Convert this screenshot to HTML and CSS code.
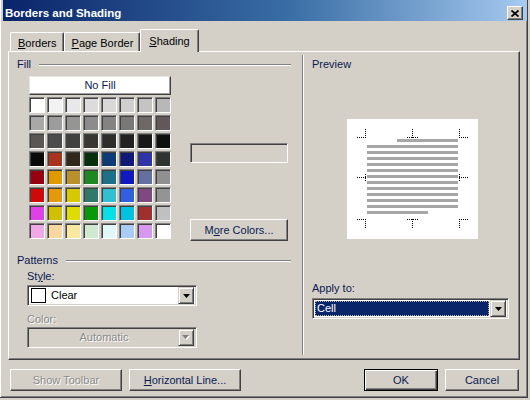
FILE: index.html
```html
<!DOCTYPE html>
<html lang="en">

<head>
    <meta charset="UTF-8">
    <title>Borders and Shading</title>
    <link rel="stylesheet" href="styles.css">
</head>

<body>
    <div class="window">
        <div class="titlebar">
            <span class="title">Borders and Shading</span>
            <button class="close">
                <svg width="8" height="7" viewBox="0 0 8 7">
                    <path d="M0.5 0.5 L7.5 6.5 M7.5 0.5 L0.5 6.5" stroke="#000" stroke-width="1.7" fill="none"/>
                </svg>
            </button>
        </div>

        <div class="tabs">
            <div class="tab"><u>B</u>orders</div>
            <div class="tab"><u>P</u>age Border</div>
            <div class="tab active"><u>S</u>hading</div>
        </div>

        <div class="panel">
            <div class="col-left">
                <div class="group-head"><span>Fill</span><div class="etch"></div></div>

                <div class="fill-body">
                    <div class="palette">
                        <button class="no-fill">No Fill</button>
                        <div class="swatches">
                            <!-- row 1 -->
                            <span class="swatch" style="background:#ffffff"></span>
                            <span class="swatch" style="background:#f2f2f2"></span>
                            <span class="swatch" style="background:#e8e8ea"></span>
                            <span class="swatch" style="background:#dcdcdc"></span>
                            <span class="swatch" style="background:#d8d8d8"></span>
                            <span class="swatch" style="background:#cfcfcf"></span>
                            <span class="swatch" style="background:#c4c4c4"></span>
                            <span class="swatch" style="background:#b8b8b8"></span>
                            <!-- row 2 -->
                            <span class="swatch" style="background:#a8a8a8"></span>
                            <span class="swatch" style="background:#9c9c9c"></span>
                            <span class="swatch" style="background:#959595"></span>
                            <span class="swatch" style="background:#8c8c8c"></span>
                            <span class="swatch" style="background:#838383"></span>
                            <span class="swatch" style="background:#787878"></span>
                            <span class="swatch" style="background:#6e6866"></span>
                            <span class="swatch" style="background:#62585a"></span>
                            <!-- row 3 -->
                            <span class="swatch" style="background:#5a5654"></span>
                            <span class="swatch" style="background:#4c4c4c"></span>
                            <span class="swatch" style="background:#404240"></span>
                            <span class="swatch" style="background:#383830"></span>
                            <span class="swatch" style="background:#2e2e2e"></span>
                            <span class="swatch" style="background:#222222"></span>
                            <span class="swatch" style="background:#191919"></span>
                            <span class="swatch" style="background:#0e120e"></span>
                            <!-- row 4 -->
                            <span class="swatch" style="background:#0a0a0a"></span>
                            <span class="swatch" style="background:#a83420"></span>
                            <span class="swatch" style="background:#30281a"></span>
                            <span class="swatch" style="background:#08300c"></span>
                            <span class="swatch" style="background:#0c3c78"></span>
                            <span class="swatch" style="background:#101878"></span>
                            <span class="swatch" style="background:#3034a8"></span>
                            <span class="swatch" style="background:#303430"></span>
                            <!-- row 5 -->
                            <span class="swatch" style="background:#980010"></span>
                            <span class="swatch" style="background:#e09a00"></span>
                            <span class="swatch" style="background:#b8902c"></span>
                            <span class="swatch" style="background:#208820"></span>
                            <span class="swatch" style="background:#1c7088"></span>
                            <span class="swatch" style="background:#1018c0"></span>
                            <span class="swatch" style="background:#6470a0"></span>
                            <span class="swatch" style="background:#909090"></span>
                            <!-- row 6 -->
                            <span class="swatch" style="background:#d00808"></span>
                            <span class="swatch" style="background:#e4980c"></span>
                            <span class="swatch" style="background:#d8c800"></span>
                            <span class="swatch" style="background:#307868"></span>
                            <span class="swatch" style="background:#30c0d0"></span>
                            <span class="swatch" style="background:#3060e0"></span>
                            <span class="swatch" style="background:#804880"></span>
                            <span class="swatch" style="background:#949494"></span>
                            <!-- row 7 -->
                            <span class="swatch" style="background:#e040e8"></span>
                            <span class="swatch" style="background:#d0c000"></span>
                            <span class="swatch" style="background:#e0dc00"></span>
                            <span class="swatch" style="background:#089808"></span>
                            <span class="swatch" style="background:#08e0e8"></span>
                            <span class="swatch" style="background:#00c0e0"></span>
                            <span class="swatch" style="background:#a03030"></span>
                            <span class="swatch" style="background:#c0c0c0"></span>
                            <!-- row 8 -->
                            <span class="swatch" style="background:#f0a8e8"></span>
                            <span class="swatch" style="background:#f8d8a0"></span>
                            <span class="swatch" style="background:#f8e8a0"></span>
                            <span class="swatch" style="background:#d0e8d0"></span>
                            <span class="swatch" style="background:#e0f8f8"></span>
                            <span class="swatch" style="background:#a8ccf4"></span>
                            <span class="swatch" style="background:#d898f0"></span>
                            <span class="swatch" style="background:#ffffff"></span>
                        </div>
                    </div>
                    <div class="fill-side">
                        <div class="sample"></div>
                        <button class="btn more">M<u>o</u>re Colors...</button>
                    </div>
                </div>

                <div class="group-head patterns-head"><span>Patterns</span><div class="etch"></div></div>

                <div class="patterns-body">
                    <div class="field-label">St<u>y</u>le:</div>
                    <div class="combo">
                        <span class="pattern-box"></span>
                        <span class="combo-text">Clear</span>
                        <span class="drop">
                            <svg width="7" height="4" viewBox="0 0 7 4"><path d="M0 0h7L3.5 4z" fill="#000"/></svg>
                        </span>
                    </div>

                    <div class="field-label disabled gap">Color:</div>
                    <div class="combo combo-disabled">
                        <span class="combo-text centered">Automatic</span>
                        <span class="drop">
                            <svg width="8" height="5" viewBox="0 0 8 5">
                                <path d="M1 1h7L4.5 5z" fill="#fff"/>
                                <path d="M0 0h7L3.5 4z" fill="#808080"/>
                            </svg>
                        </span>
                    </div>
                </div>
            </div>

            <div class="divider"></div>

            <div class="col-right">
                <div class="group-head"><span>Preview</span></div>

                <div class="preview">
                    <svg width="131" height="120" viewBox="0 0 131 120">
                        <g fill="#a6a6a6">
                            <rect x="50" y="20" width="61" height="3"/>
                            <rect x="20" y="26" width="91" height="3"/>
                            <rect x="20" y="32" width="91" height="3"/>
                            <rect x="20" y="38" width="91" height="3"/>
                            <rect x="20" y="44" width="91" height="3"/>
                            <rect x="20" y="50" width="91" height="3"/>
                            <rect x="20" y="56" width="91" height="3"/>
                            <rect x="20" y="62" width="91" height="3"/>
                            <rect x="20" y="68" width="91" height="3"/>
                            <rect x="20" y="74" width="91" height="3"/>
                            <rect x="20" y="80" width="91" height="3"/>
                            <rect x="20" y="86" width="91" height="3"/>
                            <rect x="20" y="92" width="61" height="3"/>
                        </g>
                        <!-- cell corner and edge marks -->
                        <g stroke="#000" stroke-width="1" stroke-dasharray="1 1" fill="none">
                            <path d="M10 18.5h9 M18.5 10v9"/>
                            <path d="M65.5 10v9 M60 18.5h11"/>
                            <path d="M112.5 10v9 M112 18.5h10"/>
                            <path d="M10 58.5h9 M18.5 55v8"/>
                            <path d="M112 58.5h10 M112.5 55v8"/>
                            <path d="M10 100.5h9 M18.5 100v10"/>
                            <path d="M60 100.5h11 M65.5 100v10"/>
                            <path d="M112 100.5h10 M112.5 100v10"/>
                        </g>
                    </svg>
                </div>

                <div class="field-label apply-label">Apply to:</div>
                <div class="combo apply">
                    <span class="selected">Cell</span>
                    <span class="drop">
                        <svg width="7" height="4" viewBox="0 0 7 4"><path d="M0 0h7L3.5 4z" fill="#000"/></svg>
                    </span>
                </div>
            </div>
        </div>

        <div class="footer">
            <button class="btn wide disabled">Show Toolbar</button>
            <button class="btn wide"><u>H</u>orizontal Line...</button>
            <div class="spacer"></div>
            <button class="btn small default">OK</button>
            <button class="btn small">Cancel</button>
        </div>
    </div>
</body>

</html>
```

FILE: styles.css
```css
* {
    box-sizing: border-box;
}

body {
    margin: 0;
    background-color: #d4d0c8;
    font-family: "Liberation Sans", Arial, sans-serif;
    font-size: 11px;
    line-height: 13px;
    color: #000;
}

button {
    font: inherit;
    color: inherit;
    padding: 0;
    margin: 0;
}

u {
    text-decoration-thickness: 1px;
    text-underline-offset: 1px;
}

.window {
    width: 528px;
    height: 398px;
    padding-left: 3px;
    border-right: 1px solid #404040;
    border-bottom: 1px solid #404040;
    box-shadow: inset 1px 0 0 #fff, inset -1px -1px 0 #808080;
    display: flex;
    flex-direction: column;
}

/* title bar */
.titlebar {
    height: 21px;
    display: flex;
    align-items: flex-start;
    justify-content: space-between;
    padding: 0 4px 0 2px;
    background: linear-gradient(to right, #0a246a 0%, #3a6ea5 55%, #a6caf0 100%);
}

.title {
    margin-top: 7px;
    color: #fff;
    font-weight: bold;
    font-size: 11.5px;
}

.close {
    margin-top: 6px;
    width: 16px;
    height: 14px;
    background-color: #d4d0c8;
    border: 1px solid;
    border-color: #fff #404040 #404040 #fff;
    box-shadow: inset -1px -1px 0 #808080;
    display: flex;
    align-items: center;
    justify-content: center;
}

.close svg {
    display: block;
}

/* tabs */
.tabs {
    height: 30px;
    padding-left: 7px;
    display: flex;
    align-items: flex-end;
}

.tab {
    height: 19px;
    padding: 4px 6px 0 7px;
    border: 1px solid;
    border-color: #fff #404040 transparent #fff;
    border-bottom: none;
    border-radius: 2px 2px 0 0;
    box-shadow: inset -1px 0 0 #808080;
    white-space: nowrap;
}

.tab.active {
    position: relative;
    z-index: 1;
    height: 23px;
    margin-bottom: -1px;
    padding: 5px 8px 0 8px;
    background-color: #d4d0c8;
}

/* tab page */
.panel {
    margin-left: 5px;
    width: 512px;
    height: 309px;
    border: 1px solid;
    border-color: #fff #404040 #404040 #fff;
    box-shadow: inset -1px -1px 0 #808080;
    display: flex;
}

.col-left {
    width: 293px;
    padding: 6px 11px 0 8px;
}

.divider {
    width: 2px;
    margin: 3px 0 4px;
    border-left: 1px solid #808080;
    border-right: 1px solid #fff;
}

.col-right {
    flex: 1;
    padding: 6px 0 0 8px;
}

.group-head {
    display: flex;
    align-items: center;
    gap: 8px;
    color: #0a1a50;
}

.etch {
    flex: 1;
    height: 2px;
    border-top: 1px solid #808080;
    border-bottom: 1px solid #fff;
}

/* fill */
.fill-body {
    margin: 5px 0 0 12px;
    display: flex;
    gap: 19px;
}

.palette {
    width: 142px;
}

.no-fill {
    display: block;
    width: 142px;
    height: 19px;
    background-color: #fff;
    border: 1px solid;
    border-color: #e8e6e0 #404040 #404040 #e8e6e0;
    box-shadow: inset -1px -1px 0 #a0a0a0;
    color: #0a1a50;
}

.swatches {
    margin-top: 2px;
    display: grid;
    grid-template-columns: repeat(8, 16px);
    grid-auto-rows: 16px;
    gap: 2px;
}

.swatch {
    border: 1px solid;
    border-color: #808080 #fff #fff #808080;
    box-shadow: inset 1px 1px 0 #404040;
}

.fill-side {
    width: 98px;
}

.sample {
    margin-top: 67px;
    height: 20px;
    border: 1px solid;
    border-color: #808080 #fff #fff #808080;
    box-shadow: inset 1px 1px 0 #404040, inset -1px -1px 0 #d4d0c8;
}

.btn {
    height: 22px;
    background-color: #d4d0c8;
    border: 1px solid;
    border-color: #fff #404040 #404040 #fff;
    box-shadow: inset -1px -1px 0 #808080;
    color: #0a1a50;
    white-space: nowrap;
}

.btn.more {
    display: block;
    width: 98px;
    margin-top: 56px;
}

/* patterns */
.patterns-head {
    margin-top: 13px;
}

.patterns-body {
    margin-left: 10px;
    width: 170px;
}

.field-label {
    margin-top: 3px;
    margin-bottom: 2px;
    color: #0a1a50;
}

.field-label.gap {
    margin-top: 7px;
    margin-bottom: 1px;
}

.disabled {
    color: #8a8a8a;
    text-shadow: 1px 1px 0 #fff;
}

.combo {
    height: 21px;
    padding: 2px;
    display: flex;
    align-items: center;
    background-color: #fff;
    border: 1px solid;
    border-color: #808080 #fff #fff #808080;
    box-shadow: inset 1px 1px 0 #404040, inset -1px -1px 0 #d4d0c8;
}

.combo-disabled {
    background-color: #d4d0c8;
}

.pattern-box {
    width: 15px;
    height: 15px;
    margin-left: 1px;
    border: 1px solid #000;
    background-color: #fff;
}

.combo-text {
    flex: 1;
    padding-left: 5px;
}

.combo-text.centered {
    text-align: center;
    padding-left: 0;
    color: #8a8a8a;
    text-shadow: 1px 1px 0 #fff;
}

.drop {
    width: 16px;
    height: 17px;
    background-color: #d4d0c8;
    border: 1px solid;
    border-color: #d4d0c8 #404040 #404040 #d4d0c8;
    box-shadow: inset 1px 1px 0 #fff, inset -1px -1px 0 #808080;
    display: flex;
    align-items: center;
    justify-content: center;
}

.drop svg {
    display: block;
}

/* preview */
.preview {
    margin: 48px 0 0 35px;
    width: 131px;
    height: 120px;
    background-color: #fff;
}

.preview svg {
    display: block;
}

.apply-label {
    margin-top: 43px;
    margin-bottom: 3px;
}

.combo.apply {
    width: 197px;
}

.selected {
    flex: 1;
    height: 15px;
    margin-right: 1px;
    padding-left: 1px;
    line-height: 13px;
    background-color: #0a246a;
    color: #fff;
    border: 1px dotted #b8b0a0;
}

/* bottom buttons */
.footer {
    margin-top: 9px;
    padding: 0 8px 0 7px;
    display: flex;
    gap: 7px;
}

.spacer {
    flex: 1;
}

.btn.wide {
    width: 112px;
}

.btn.small {
    width: 74px;
}

.btn.default {
    border-color: #000;
    box-shadow: inset 1px 1px 0 #fff, inset -1px -1px 0 #404040, inset -2px -2px 0 #808080;
}
```
